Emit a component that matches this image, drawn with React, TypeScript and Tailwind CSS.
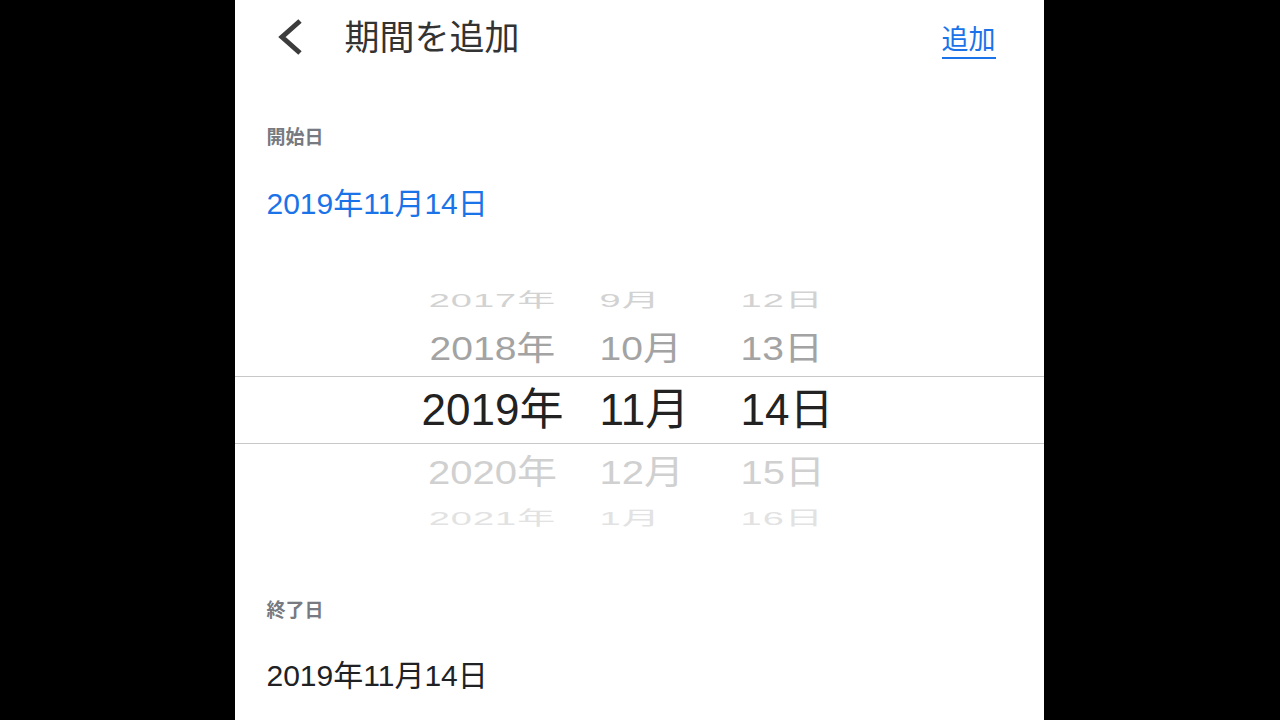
import React from 'react';

const font = { fontFamily: '"Liberation Sans", "Noto Sans CJK JP", sans-serif' };

type Row = {
  year: string;
  month: string;
  day: string;
  h: string;
  text: string;
  extra?: string;
};

const rows: Row[] = [
  { year: '2017年', month: '9月', day: '12日', h: 'h-[40px]', text: 'text-[38px] tracking-[1px] text-[#d2d2d2]', extra: 'scale-y-[0.5]' },
  { year: '2018年', month: '10月', day: '13日', h: 'h-[56px]', text: 'text-[39px] text-[#a3a3a3]', extra: 'scale-y-[0.85]' },
  { year: '2019年', month: '11月', day: '14日', h: 'h-[68px] border-y border-[#c8c8c8]', text: 'text-[44px] text-[#222222]' },
  { year: '2020年', month: '12月', day: '15日', h: 'h-[56px]', text: 'text-[40px] text-[#d0d0d0]', extra: 'scale-y-[0.85]' },
  { year: '2021年', month: '1月', day: '16日', h: 'h-[35px]', text: 'text-[38px] tracking-[1px] text-[#e2e2e2]', extra: 'scale-y-[0.5]' },
];

function PickerRow({ row }: { row: Row }) {
  return (
    <div className={`flex items-center overflow-hidden pl-[183px] ${row.h}`}>
      <div className={`flex items-center leading-none ${row.text} ${row.extra ?? ''}`}>
        <span className="w-[150px] text-center">{row.year}</span>
        <span className="ml-[32px] w-[141px]">{row.month}</span>
        <span>{row.day}</span>
      </div>
    </div>
  );
}

export default function App() {
  return (
    <div className="flex h-[720px] w-[1280px] justify-center overflow-hidden bg-black" style={font}>
      <div className="ml-[-2px] w-[809px] bg-white">
        {/* header */}
        <div className="flex h-[76px] items-center pl-[40px] pr-[48px]">
          <svg width="28" height="40" viewBox="0 0 28 40" className="shrink-0">
            <polyline points="25,3 7,19 25,35" fill="none" stroke="#3c3c3c" strokeWidth="5" strokeLinejoin="miter" />
          </svg>
          <span className="ml-[42px] text-[35px] leading-[36px] text-[#333333]">期間を追加</span>
          <span className="ml-auto mt-[8px] border-b-2 border-[#1a73e8] pb-[3px] text-[27px] leading-[28px] text-[#1a73e8]">
            追加
          </span>
        </div>

        <div className="px-[32px]">
          <div className="pt-[52px] text-[19px] font-bold leading-[20px] text-[#777a80]">開始日</div>
          <div className="pt-[42px] text-[30px] leading-[28px] text-[#1a73e8]">2019年11月14日</div>
        </div>

        {/* wheel picker */}
        <div className="mt-[62px] flex flex-col">
          {rows.map((r) => (
            <PickerRow key={r.year} row={r} />
          ))}
        </div>

        <div className="px-[32px]">
          <div className="pt-[66px] text-[19px] font-bold leading-[20px] text-[#777a80]">終了日</div>
          <div className="pt-[41px] text-[30px] leading-[28px] text-[#202124]">2019年11月14日</div>
        </div>
      </div>
    </div>
  );
}
